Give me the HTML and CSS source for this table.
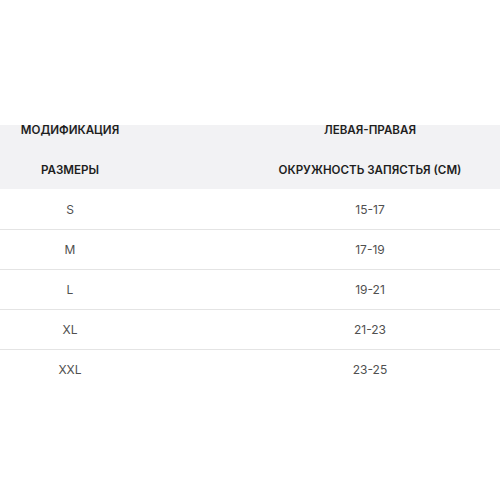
FILE: index.html
```html
<!DOCTYPE html>
<html lang="ru">
<head>
<meta charset="utf-8">
<link rel="stylesheet" href="styles.css">
</head>
<body>
<div class="wrap">
  <table class="sizes">
    <colgroup><col class="col1"><col class="col2"></colgroup>
    <thead>
      <tr class="head-row top"><th class="c1">Модификация</th><th class="c2">Левая-правая</th></tr>
      <tr class="head-row"><th class="c1">Размеры</th><th class="c2">Окружность запястья (см)</th></tr>
    </thead>
    <tbody>
      <tr><td class="c1">S</td><td class="c2">15-17</td></tr>
      <tr><td class="c1">M</td><td class="c2">17-19</td></tr>
      <tr><td class="c1">L</td><td class="c2">19-21</td></tr>
      <tr><td class="c1">XL</td><td class="c2">21-23</td></tr>
      <tr><td class="c1">XXL</td><td class="c2">23-25</td></tr>
    </tbody>
  </table>
</div>
</body>
</html>
```
FILE: styles.css
```css
html, body { margin: 0; padding: 0; background: #fff; }
body { font-family: Inter, "Noto Sans", "DejaVu Sans", sans-serif; }
.wrap {
  margin-top: 125px;
  width: 500px;
}
.sizes {
  width: 500px;
  border-collapse: collapse;
  table-layout: fixed;
}
.col1 { width: 140px; }
.col2 { width: 360px; }
.sizes .c1 { padding: 0; }
.sizes .c2 { padding: 0 0 0 100px; }
.head-row th {
  background: #f2f2f4;
  height: 39px;
  font-size: 11.6px;
  font-weight: 600;
  text-transform: uppercase;
  color: #1e1e1e;
  text-align: center;
  white-space: nowrap;
}
.head-row.top th {
  height: 25px;
  line-height: 11px;
  vertical-align: top;
}
.sizes td {
  height: 40px;
  text-align: center;
  font-size: 12px;
  color: #505050;
}
.sizes tbody tr + tr td { height: 39px; border-top: 1px solid #e4e4e4; }
```
